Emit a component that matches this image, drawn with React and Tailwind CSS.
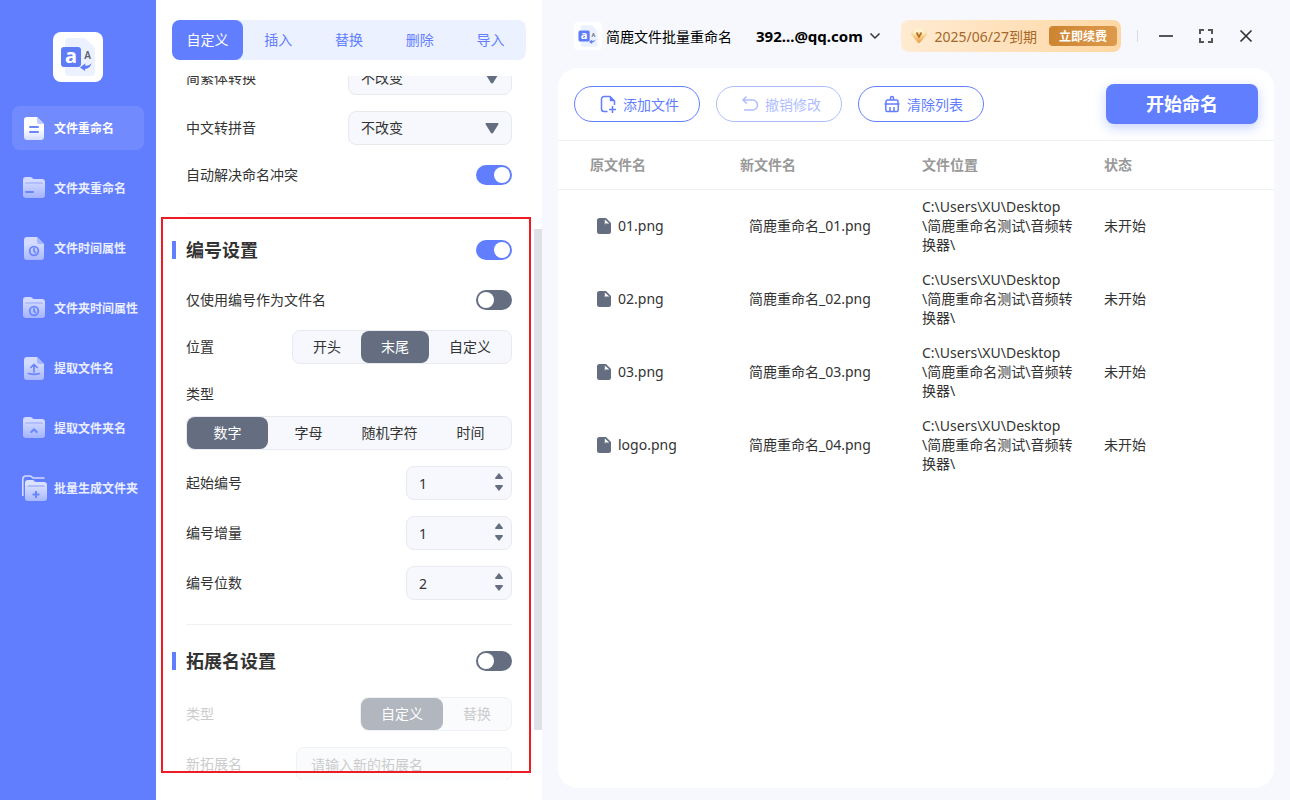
import { useLayoutEffect, useRef, useState } from "react";

function LogoMark({ className }) {
  return (
    <svg viewBox="0 0 50 50" className={className} aria-hidden="true">
      <path d="M16 6h16l10 10v24a4 4 0 0 1-4 4H16a4 4 0 0 1-4-4V10a4 4 0 0 1 4-4z" fill="#ecf1ff" />
      <rect x="8" y="15" width="20" height="20" rx="3" fill="#5f7cf7" />
      <text x="18" y="31" textAnchor="middle" fontSize="20" fontWeight="700" fill="#fff" fontFamily="Noto Sans, sans-serif">a</text>
      <text x="34.500" y="27" textAnchor="middle" fontSize="10" fontWeight="600" fill="#5a6170" fontFamily="Noto Sans, sans-serif">A</text>
      <path d="M27 35.500l5.500-4.200-.3 2.400c3 .2 4.800-.8 6.300-2.700-.7 3.500-3 5.800-6.600 6l.5 2.200z" fill="#5f7cf7" />
    </svg>
  );
}

function NavGradients() {
  return (
    <svg width="0" height="0" className="absolute" aria-hidden="true">
      <defs>
        <linearGradient id="navSolid" x1="0" y1="0" x2="0" y2="1">
          <stop offset="0.5" stopColor="#fff" />
          <stop offset="1" stopColor="#d3dcff" />
        </linearGradient>
        <linearGradient id="navSoft" x1="0" y1="0" x2="0" y2="1">
          <stop offset="0.3" stopColor="#d3dbff" />
          <stop offset="1" stopColor="#a9b8ff" />
        </linearGradient>
        <linearGradient id="navFolder" x1="0" y1="0" x2="0" y2="1">
          <stop offset="0.2" stopColor="#dce2ff" />
          <stop offset="1" stopColor="#a9b8ff" />
        </linearGradient>
      </defs>
    </svg>
  );
}

const DOC = "M5 1h10l7 7v13a3 3 0 0 1-3 3H5a3 3 0 0 1-3-3V4a3 3 0 0 1 3-3z";
const FOLDER = "M4 1h4.500c1.500 0 2 2 3.500 2h8a3 3 0 0 1 3 3v13a3 3 0 0 1-3 3H4a3 3 0 0 1-3-3V4a3 3 0 0 1 3-3z";

function NavIcon({ kind, doc, active }) {
  const ink = "#6b86fb";
  return (
    <svg viewBox="0 0 24 24" className="size-6 shrink-0 overflow-visible" fill="none" aria-hidden="true">
      {kind === "batch" ? (
        <>
          <path d="M.8 20V3a3 3 0 0 1 3-3h4c2 0 2 2 4 2H22.500" stroke="#d3dbff" strokeWidth="1.600" />
          <g transform="translate(2 3)">
            <path d={FOLDER} fill="url(#navFolder)" />
            <path d="M3 8a2 2 0 0 1 2-2h14a2 2 0 0 1 2 2z" fill="#b0beff" />
            <path d="M12 12v7M8.500 15.500h7" stroke={ink} strokeWidth="2" />
          </g>
        </>
      ) : doc ? (
        <>
          <path d={DOC} fill={active ? "url(#navSolid)" : "url(#navSoft)"} />
          <path d="M15 1l7 7h-5a2 2 0 0 1-2-2z" fill={active ? "#c2cdff" : "#a6b5ff"} />
        </>
      ) : (
        <>
          <path d={FOLDER} fill="url(#navFolder)" opacity="0.92" />
          <path d="M3 8a2 2 0 0 1 2-2h14a2 2 0 0 1 2 2z" fill="#b0beff" />
        </>
      )}
      {kind === "lines" && <path d="M8 11h8M8 16h8" stroke={ink} strokeWidth="2" strokeLinecap="round" />}
      {kind === "dash" && <path d="M4 16h7" stroke={ink} strokeWidth="2" strokeLinecap="round" />}
      {kind === "clock" && (
        <g stroke={ink} strokeWidth="1.800" strokeLinecap="round">
          <circle cx="12" cy="15" r="4.300" />
          <path d="M12 12.800V15l1.300 1.500" />
        </g>
      )}
      {kind === "upload" && (
        <path d="M12 16V9M8.800 11.500L12 8.500l3.200 3M6.500 17.500q5.500 1.600 11 0" stroke={ink} strokeWidth="1.700" strokeLinecap="round" />
      )}
      {kind === "chevron" && <path d="M9.300 16l2.700-2.700 2.700 2.700" stroke={ink} strokeWidth="2" strokeLinecap="round" />}
    </svg>
  );
}

const NAV = [
  { label: "文件重命名", kind: "lines", doc: true, active: true },
  { label: "文件夹重命名", kind: "dash" },
  { label: "文件时间属性", kind: "clock", doc: true },
  { label: "文件夹时间属性", kind: "clock" },
  { label: "提取文件名", kind: "upload", doc: true },
  { label: "提取文件夹名", kind: "chevron" },
  { label: "批量生成文件夹", kind: "batch" },
];

function Sidebar() {
  return (
    <aside className="flex w-[156px] shrink-0 flex-col bg-[#617eff] px-3 pt-8">
      <NavGradients />
      <div className="self-center rounded-lg bg-white">
        <LogoMark className="size-[50px]" />
      </div>
      <nav className="mt-6 flex flex-col gap-4">
        {NAV.map((item) => (
          <a
            key={item.label}
            href="#"
            className={
              item.active
                ? "flex h-11 items-center gap-2 rounded-lg bg-white/10 pl-2.5 text-xs font-bold whitespace-nowrap text-white"
                : "flex h-11 items-center gap-2 rounded-lg pl-2.5 text-xs font-bold whitespace-nowrap text-[#eaeeff]"
            }
          >
            <NavIcon {...item} />
            <span className="pt-0.5">{item.label}</span>
          </a>
        ))}
      </nav>
    </aside>
  );
}

function Tabs() {
  const [current, setCurrent] = useState("自定义");
  return (
    <div role="tablist" className="mx-4 flex h-10 rounded-lg bg-[#ecf1ff]">
      {["自定义", "插入", "替换", "删除", "导入"].map((name) => (
        <button
          key={name}
          type="button"
          role="tab"
          aria-selected={name === current}
          onClick={() => setCurrent(name)}
          className={
            name === current
              ? "flex-1 rounded-lg bg-[#617eff] text-white"
              : "flex-1 rounded-lg text-[#617eff]"
          }
        >
          {name}
        </button>
      ))}
    </div>
  );
}

function SelectRow({ id, label }) {
  return (
    <div className="flex h-[34px] items-center justify-between">
      <label htmlFor={id}>{label}</label>
      <div className="grid w-[164px] items-center rounded-lg border border-[#e9eaf0] bg-[#f6f8fd]">
        <select id={id} className="col-start-1 row-start-1 h-8 appearance-none bg-transparent pl-3 outline-none">
          <option>不改变</option>
        </select>
        <svg viewBox="0 0 14 12" className="pointer-events-none col-start-1 row-start-1 mr-3 h-3 w-3.5 justify-self-end" aria-hidden="true">
          <path d="M1.300 1h11.400a.8.8 0 0 1 .7 1.300L8.200 10.800a1.400 1.400 0 0 1-2.400 0L.6 2.300A.8.8 0 0 1 1.300 1z" fill="#646e80" />
        </svg>
      </div>
    </div>
  );
}

function Switch({ id, on }) {
  return (
    <input
      id={id}
      type="checkbox"
      role="switch"
      defaultChecked={on}
      className="h-5 w-9 shrink-0 appearance-none rounded-full bg-[#646e80] p-0.5 before:block before:size-4 before:rounded-full before:bg-white checked:bg-[#617eff] checked:before:translate-x-4"
    />
  );
}

function SwitchRow({ id, label, on }) {
  return (
    <div className="flex h-7 items-center justify-between">
      <label htmlFor={id}>{label}</label>
      <Switch id={id} on={on} />
    </div>
  );
}

function SectionHeading({ id, label, on }) {
  return (
    <div className="mb-1.5 -ml-3.5 flex h-7 items-center justify-between">
      <h2 className="flex items-center gap-2.5 text-lg font-bold">
        <span className="h-[18px] w-1 bg-[#617eff]" />
        <label htmlFor={id}>{label}</label>
      </h2>
      <Switch id={id} on={on} />
    </div>
  );
}

function Segmented({ options, initial, fill, disabled, label }) {
  const [value, setValue] = useState(initial);
  return (
    <div
      role="group"
      aria-label={label}
      className={
        disabled
          ? "flex h-[34px] rounded-lg border border-[#f0f1f4] bg-[#fafbfd] text-[#ccc]"
          : "flex h-[34px] rounded-lg border border-[#e9eaf0] bg-[#f6f8fd]"
      }
    >
      {options.map((name) => (
        <button
          key={name}
          type="button"
          disabled={disabled}
          aria-pressed={name === value}
          onClick={() => setValue(name)}
          className={[
            "rounded-lg",
            fill ? "flex-1" : "px-5",
            name === value ? (disabled ? "bg-[#b1b6bf] text-white" : "bg-[#646e80] text-white") : "",
          ].join(" ")}
        >
          {name}
        </button>
      ))}
    </div>
  );
}

function NumberRow({ id, label, initial }) {
  const [value, setValue] = useState(initial);
  return (
    <div className="flex h-[34px] items-center justify-between">
      <label htmlFor={id}>{label}</label>
      <div className="flex h-[34px] w-[106px] items-center rounded-lg border border-[#e9eaf0] bg-[#f6f8fd] pr-2">
        <input
          id={id}
          inputMode="numeric"
          value={value}
          onChange={(e) => setValue(Number(e.target.value) || 0)}
          className="h-5 w-0 flex-1 bg-transparent pl-3 outline-none"
        />
        <div className="flex flex-col gap-1.5 pb-0.5">
          <button type="button" aria-label="增加" onClick={() => setValue(value + 1)}>
            <svg viewBox="0 0 8 6" className="block h-1.5 w-2" aria-hidden="true">
              <path d="M4 0l4 5-.5 1h-7L0 5z" fill="#646e80" />
            </svg>
          </button>
          <button type="button" aria-label="减少" onClick={() => setValue(value - 1)}>
            <svg viewBox="0 0 8 6" className="block h-1.5 w-2" aria-hidden="true">
              <path d="M4 6l4-5-.5-1h-7L0 1z" fill="#646e80" />
            </svg>
          </button>
        </div>
      </div>
    </div>
  );
}

function SettingsPanel() {
  const scroller = useRef(null);
  useLayoutEffect(() => {
    scroller.current.scrollTop = 15;
  }, []);
  return (
    <section className="relative flex w-[386px] shrink-0 flex-col bg-white py-5 leading-[18px]">
      <Tabs />
      <div ref={scroller} className="mt-4 min-h-0 flex-1 overflow-y-auto px-[30px] pb-6 [scrollbar-width:none]">
        <div className="flex flex-col gap-4 border-b border-[#f0f1f3] pb-6">
          <SelectRow id="simplified" label="简繁体转换" />
          <SelectRow id="pinyin" label="中文转拼音" />
          <SwitchRow id="conflict" label="自动解决命名冲突" on />
        </div>
        <div className="flex flex-col gap-4 border-b border-[#f0f1f3] pt-[22px] pb-6">
          <SectionHeading id="numbering" label="编号设置" on />
          <SwitchRow id="only-number" label="仅使用编号作为文件名" />
          <div className="flex items-center justify-between">
            <span>位置</span>
            <Segmented label="位置" options={["开头", "末尾", "自定义"]} initial="末尾" />
          </div>
          <div className="flex flex-col gap-2">
            <span className="flex h-7 items-center">类型</span>
            <Segmented label="类型" options={["数字", "字母", "随机字符", "时间"]} initial="数字" fill />
          </div>
          <NumberRow id="start" label="起始编号" initial={1} />
          <NumberRow id="step" label="编号增量" initial={1} />
          <NumberRow id="digits" label="编号位数" initial={2} />
        </div>
        <div className="flex flex-col gap-4 pt-[22px] pb-4">
          <SectionHeading id="extension" label="拓展名设置" />
          <div className="flex items-center justify-between">
            <span className="text-[#ccc]">类型</span>
            <Segmented label="拓展名类型" options={["自定义", "替换"]} initial="自定义" disabled />
          </div>
          <div className="flex items-center justify-between text-[#ccc]">
            <label htmlFor="new-ext">新拓展名</label>
            <input
              id="new-ext"
              disabled
              placeholder="请输入新的拓展名"
              className="h-[34px] w-[216px] rounded-lg border border-[#f0f1f4] bg-[#fafbfd] px-3.5 placeholder:text-[#ccc]"
            />
          </div>
        </div>
      </div>
      <div className="absolute top-[229px] right-0 h-[501px] w-2 bg-[#e0e0e9]" />
      <div className="pointer-events-none absolute top-[217px] left-[5px] h-[556px] w-[370px] border-2 border-[#ed1c24]" />
    </section>
  );
}

function TitleBar() {
  return (
    <header className="flex h-8 items-center">
      <div className="ml-4 rounded bg-white">
        <LogoMark className="size-7" />
      </div>
      <h1 className="ml-1 whitespace-nowrap text-black">简鹿文件批量重命名</h1>
      <button type="button" className="ml-6 flex items-center gap-1.5 text-[15px] font-bold text-black">
        392...@qq.com
        <svg viewBox="0 0 12 8" className="h-2 w-3" fill="none" aria-hidden="true">
          <path d="M1.500 1.500L6 6l4.500-4.500" stroke="#333" strokeWidth="1.500" />
        </svg>
      </button>
      <div className="ml-auto flex h-8 items-center rounded-lg bg-linear-to-r from-[#ffebd2] to-[#ffd7a4] pr-1 pl-2.5">
        <svg viewBox="0 0 16 16" className="size-4" aria-hidden="true">
          <defs>
            <linearGradient id="gem" x1="0" y1="0" x2="0" y2="1">
              <stop offset="0" stopColor="#fff0d2" />
              <stop offset="0.450" stopColor="#fbd797" />
              <stop offset="1" stopColor="#eb9f45" />
            </linearGradient>
          </defs>
          <path d="M4.500.5h7a2 2 0 0 1 1.500.7l2.600 3.500a1.800 1.800 0 0 1 0 2.200L9.200 14.500a1.600 1.600 0 0 1-2.400 0L.4 6.900a1.800 1.800 0 0 1 0-2.200L3 1.200A2 2 0 0 1 4.500.5z" fill="url(#gem)" />
          <path d="M2 5.500L4 2h8l2 3.500-2.500 1L8 3.500l-3.500 3z" fill="#fff6e2" opacity="0.7" />
          <path d="M5.500 4.500L8 8.800l2.500-4.300" fill="none" stroke="#b07024" strokeWidth="1.700" />
        </svg>
        <span className="ml-2 text-[#a4682a]">2025/06/27到期</span>
        <button type="button" className="ml-3 h-5 w-[68px] rounded bg-linear-to-r from-[#cd842f] to-[#dd9a4c] pt-px text-xs leading-5 font-bold text-white">
          立即续费
        </button>
      </div>
      <span className="ml-4 h-3 w-px bg-[#d9dbe0]" />
      <div className="mr-9 ml-5 flex items-center gap-6">
        <button type="button" aria-label="最小化">
          <svg viewBox="0 0 16 16" className="size-4" aria-hidden="true">
            <path d="M1 8h14" stroke="#555" strokeWidth="2" />
          </svg>
        </button>
        <button type="button" aria-label="最大化">
          <svg viewBox="0 0 16 16" className="size-4" fill="none" aria-hidden="true">
            <path d="M2 6V2h4M10 2h4v4M14 10v4h-4M6 14H2v-4" stroke="#555" strokeWidth="2" />
          </svg>
        </button>
        <button type="button" aria-label="关闭">
          <svg viewBox="0 0 16 16" className="size-4" aria-hidden="true">
            <path d="M2.500 2.500l11 11M13.500 2.500l-11 11" stroke="#333" strokeWidth="1.700" />
          </svg>
        </button>
      </div>
    </header>
  );
}

const OUTLINE = "flex h-9 w-[126px] items-center justify-center gap-1.5 rounded-full border border-[#617eff] pl-1 whitespace-nowrap text-[#617eff] disabled:opacity-50";

function Toolbar() {
  return (
    <div className="flex h-[73px] items-center gap-4 border-b border-[#f0f1f3] px-4">
      <button type="button" className={OUTLINE}>
        <svg viewBox="0 0 18 18" className="size-[18px]" fill="none" stroke="currentColor" strokeWidth="1.500" aria-hidden="true">
          <path d="M8.500 16.500H5A2.500 2.500 0 0 1 2.500 14V4A2.500 2.500 0 0 1 5 1.500h6L15.500 6v4" strokeLinejoin="round" />
          <path d="M11 1.500V6h4.500z" fill="currentColor" strokeWidth="0.500" />
          <path d="M13.500 11v7M10 14.500h7" />
        </svg>
        添加文件
      </button>
      <button type="button" disabled className={OUTLINE}>
        <svg viewBox="0 0 18 18" className="size-[18px]" fill="none" stroke="currentColor" strokeWidth="1.500" aria-hidden="true">
          <path d="M5.500 1.500L2 5l4 3.500M2 5h9.500a5 5 0 0 1 0 10H3" />
        </svg>
        撤销修改
      </button>
      <button type="button" className={OUTLINE}>
        <svg viewBox="0 0 18 18" className="size-[18px]" fill="none" stroke="currentColor" strokeWidth="1.500" aria-hidden="true">
          <path d="M7.500 5V3a1.500 1.500 0 0 1 3 0v2M3 9V6.500A1.500 1.500 0 0 1 4.500 5h9A1.500 1.500 0 0 1 15 6.500V9M1.500 9h15M2.800 9v6a1.500 1.500 0 0 0 1.500 1.500h9.400a1.500 1.500 0 0 0 1.500-1.500V9M7 16.500V12M11 16.500V12" />
        </svg>
        清除列表
      </button>
      <button type="button" className="ml-auto h-10 w-[152px] rounded-lg bg-[#617eff] text-lg font-bold text-white shadow-[0_4px_12px_rgba(97,126,255,0.35)]">
        开始命名
      </button>
    </div>
  );
}

const FILES = [
  ["01.png", "简鹿重命名_01.png"],
  ["02.png", "简鹿重命名_02.png"],
  ["03.png", "简鹿重命名_03.png"],
  ["logo.png", "简鹿重命名_04.png"],
];

function FileTable() {
  return (
    <table className="w-full table-fixed text-left">
      <colgroup>
        <col className="w-[166px]" />
        <col className="w-[182px]" />
        <col className="w-[182px]" />
        <col />
      </colgroup>
      <thead>
        <tr className="h-12 border-b border-[#f0f1f3] text-[#999]">
          <th className="pl-8 font-bold">原文件名</th>
          <th className="pl-4 font-bold">新文件名</th>
          <th className="pl-4 font-bold">文件位置</th>
          <th className="pl-4 font-bold">状态</th>
        </tr>
      </thead>
      <tbody>
        {FILES.map(([oldName, newName]) => (
          <tr key={oldName} className="h-[73px]">
            <td className="pl-[39px]">
              <span className="flex items-center gap-[7px]">
                <svg viewBox="0 0 14 16" className="h-4 w-3.5" aria-hidden="true">
                  <path d="M2.500 0H7v4.500A2 2 0 0 0 9 6.500h5v7a2.500 2.500 0 0 1-2.500 2.500h-9A2.500 2.500 0 0 1 0 13.500v-11A2.500 2.500 0 0 1 2.500 0z" fill="#646e80" />
                  <path d="M7 0h2l5 5v2H9L7 5z" fill="#646e80" />
                  <path d="M7.800 1.500v3.300a.7.700 0 0 0 .7.700h3.800z" fill="#fff" />
                </svg>
                {oldName}
              </span>
            </td>
            <td className="pl-[25px]">{newName}</td>
            <td className="pr-2 pl-4">
              <span className="block">C:\Users\XU\Desktop</span>
              <span className="block">\简鹿重命名测试\音频转换器\</span>
            </td>
            <td className="pl-4">未开始</td>
          </tr>
        ))}
      </tbody>
    </table>
  );
}

export default function App() {
  return (
    <div className="flex h-screen overflow-hidden bg-[#f6f8fd] font-['Noto_Sans','Noto_Sans_CJK_SC',sans-serif] text-sm leading-[19px] text-[#333]">
      <Sidebar />
      <SettingsPanel />
      <main className="flex min-w-0 flex-1 flex-col gap-4 pt-5 pr-4 pb-3 pl-4">
        <div className="-mr-4 shrink-0">
          <TitleBar />
        </div>
        <div className="flex-1 rounded-[20px] bg-white">
          <Toolbar />
          <FileTable />
        </div>
      </main>
    </div>
  );
}
